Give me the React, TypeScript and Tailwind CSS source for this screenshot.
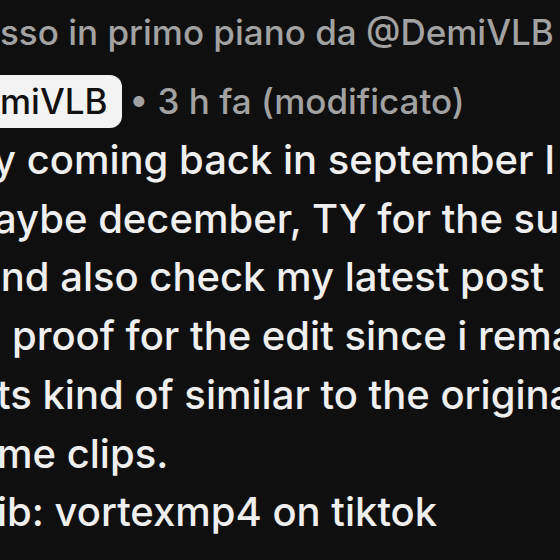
export default function App() {
  const body = [
    { text: "y coming back in september I", ml: "-ml-[7px]" },
    { text: "aybe december, TY for the support", ml: "-ml-[6px]" },
    { text: "and also check my latest post", ml: "-ml-[22px]" },
    { text: "proof for the edit since i remade", ml: "ml-[12px]" },
    { text: "ts kind of similar to the original", ml: "-ml-[3px]" },
    { text: "me clips.", ml: "-ml-[3px]" },
    { text: "ib: vortexmp4 on tiktok", ml: "-ml-[3px]" },
  ];

  return (
    <div
      className="w-[560px] h-[560px] overflow-hidden bg-[#0f0f0f] pt-[3px]"
      style={{ fontFamily: "Inter, 'Noto Sans', sans-serif" }}
    >
      <div className="whitespace-nowrap text-[35px] leading-[58px] text-[#a2a2a2] font-medium">
        sso in primo piano da @DemiVLB
      </div>

      <div className="mt-[14px] flex h-[53px] items-center whitespace-nowrap text-[35px] leading-[53px] text-[#a2a2a2] font-medium">
        <span className="-ml-[14px] flex h-[53px] items-center rounded-[12px] bg-[#f3f3f3] pl-[14px] pr-[14px] text-[#111]">
          miVLB
        </span>
        <span className="ml-[8px]">• 3 h fa (modificato)</span>
      </div>

      <div className="mt-[3px] text-[40px] leading-[58.7px] text-[#efefef] font-medium">
        {body.map((line, i) => (
          <div key={i} className={`whitespace-pre ${line.ml}`}>
            {line.text}
          </div>
        ))}
      </div>
    </div>
  );
}
